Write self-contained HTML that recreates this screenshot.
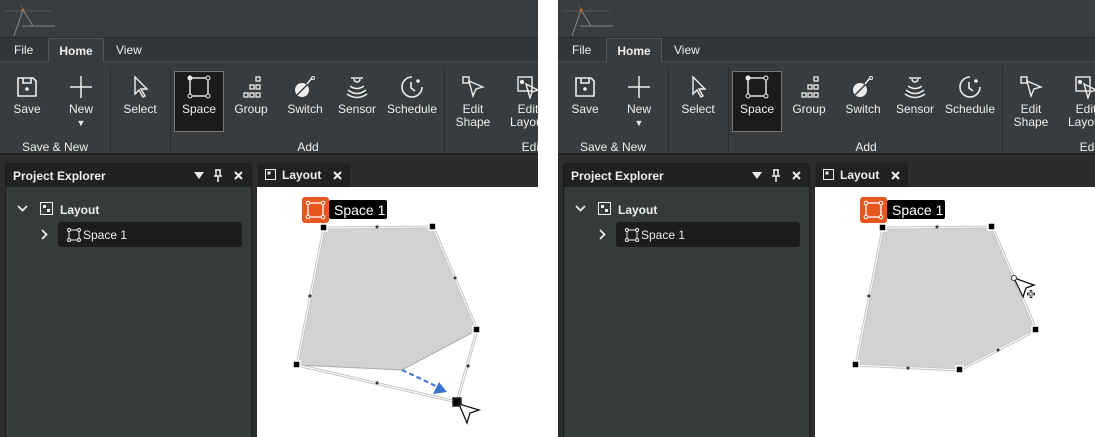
<!DOCTYPE html>
<html><head><meta charset="utf-8"><style>
*{margin:0;padding:0;box-sizing:border-box}
body{width:1095px;height:437px;background:#fff;position:relative;overflow:hidden;font-family:"Liberation Sans",sans-serif;color:#eee}
.p{position:absolute;top:0;height:437px;overflow:hidden;background:#2a2c2e}
.title{position:absolute;left:0;top:0;width:100%;height:38px;background:#3a3d40;border-bottom:1px solid #2a2c2e}
.tabs{position:absolute;left:0;top:38px;width:100%;height:24px;background:#333639;border-bottom:1px solid #4a4d50}
.tab{position:absolute;top:5px;font-size:12px;color:#eee}
.home{position:absolute;left:48px;top:0;width:56px;height:25px;background:#393c3e;border:1px solid #55585b;border-bottom:none;font-weight:bold;font-size:12px;text-align:center;padding-top:5px}
.rib{position:absolute;left:0;top:62px;width:100%;height:93px;background:#393c3e;border-bottom:2px solid #1e2022}
.it{position:absolute;top:0;width:60px;margin-left:-30px;text-align:center;font-size:12px;line-height:13px}
.it svg{display:block;margin:13px auto 4px;width:24px;height:24px}
.sep{position:absolute;top:5px;width:1px;height:86px;background:#2a2c2e}
.gl{position:absolute;top:78px;font-size:12px;transform:translateX(-50%)}
.pe{position:absolute;left:5px;top:163px;width:247px;height:280px;background:#363a3b;border:1px solid #1b1c1e;border-radius:3px 3px 0 0}
.peh{height:23px;background:#1f2123;font-size:12px;font-weight:bold;padding:5px 0 0 7px;position:relative}
.lt{position:absolute;left:258px;top:163px;width:92px;height:24px;background:#1f2123;border-radius:3px 3px 0 0;font-size:12px;font-weight:bold;padding:5px 0 0 24px}
.cv{position:absolute;left:257px;top:187px;width:400px;height:260px;background:#fff}
.t{position:absolute;font-size:12px}
</style></head><body>

<div class="p" style="left:0;width:538px">
<div class="title"><svg width="160" height="38" style="position:absolute;left:0;top:0"><path d="M4 11 L52 11" stroke="#555" stroke-width="1"/><path d="M14 36 L23 10 L33 26 M22 26 L55 26" stroke="#888" fill="none" stroke-width="1"/><path d="M20 4 L23 10" stroke="#555"/><circle cx="23" cy="10" r="1.5" fill="#c86a2a"/></svg></div>
<div class="tabs"><span class="tab" style="left:14px">File</span><div class="home">Home</div><span class="tab" style="left:116px">View</span></div>
<div class="rib">
 <div class="it" style="left:27px"><svg viewBox="0 0 24 24"><path d="M3 3h15l3 3v15H3z M8 3v5h8V3" fill="none" stroke="#eee" stroke-width="1.6"/><circle cx="12" cy="14" r="1.8" fill="#eee"/></svg>Save</div>
 <div class="it" style="left:81px"><svg viewBox="0 0 24 24"><path d="M12 1v22M1 12h22" stroke="#eee" stroke-width="1.5"/></svg>New<br><span style="font-size:9px">▼</span></div>
 <div class="sep" style="left:110px"></div>
 <div class="it" style="left:140px"><svg viewBox="0 0 24 24"><path d="M7 2v17l4-4 4 7 2-1-4-7h6z" fill="none" stroke="#eee" stroke-width="1.4"/></svg>Select</div>
 <div class="sep" style="left:170px"></div>
 <div style="position:absolute;left:174px;top:9px;width:50px;height:61px;background:#1b1b1b;border:1px solid #777"></div>
 <div class="it" style="left:199px"><svg viewBox="0 0 24 24"><rect x="3" y="3" width="18" height="18" fill="none" stroke="#eee" stroke-width="1.4"/><circle cx="3" cy="3" r="2.5" fill="#eee"/><circle cx="21" cy="3" r="2" fill="#1b1b1b" stroke="#eee"/><circle cx="3" cy="21" r="2" fill="#1b1b1b" stroke="#eee"/><circle cx="21" cy="21" r="2" fill="#1b1b1b" stroke="#eee"/></svg>Space</div>
 <div class="it" style="left:251px"><svg viewBox="0 0 24 24" fill="none" stroke="#eee" stroke-width="1.3"><rect x="17" y="2" width="4" height="4"/><rect x="11" y="10" width="4" height="4"/><rect x="17" y="10" width="4" height="4"/><rect x="5" y="18" width="4" height="4"/><rect x="11" y="18" width="4" height="4"/><rect x="17" y="18" width="4" height="4"/></svg>Group</div>
 <div class="it" style="left:305px"><svg viewBox="0 0 24 24"><circle cx="9" cy="15" r="7" fill="#eee"/><path d="M4 20l10-10" stroke="#393c3e" stroke-width="1.5"/><path d="M14 9l5-6" stroke="#eee" stroke-width="1.5"/><circle cx="20" cy="3" r="1.5" fill="none" stroke="#eee"/></svg>Switch</div>
 <div class="it" style="left:357px"><svg viewBox="0 0 24 24" fill="none" stroke="#eee" stroke-width="1.5"><path d="M6 3h12M9 4a3 3 0 006 0"/><path d="M5 11q7 5 14 0M3 15q9 7 18 0M2 19q10 7 20 0"/></svg>Sensor</div>
 <div class="it" style="left:412px"><svg viewBox="0 0 24 24" fill="none" stroke="#eee" stroke-width="1.6"><path d="M12 2a10 10 0 1 0 10 10"/><path d="M11 7v6l4 3"/><circle cx="18" cy="6" r="1" fill="#eee"/></svg>Schedule</div>
 <div class="sep" style="left:444px"></div>
 <div class="it" style="left:473px"><svg viewBox="0 0 24 24" fill="none" stroke="#eee" stroke-width="1.4"><rect x="2" y="2" width="6" height="6"/><path d="M8 6l14 6-7 2-3 7z"/></svg>Edit<br>Shape</div>
 <div class="it" style="left:528px"><svg viewBox="0 0 24 24" fill="none" stroke="#eee" stroke-width="1.4"><rect x="2" y="2" width="14" height="14"/><path d="M10 9l12 6-6 2-2 6z"/><circle cx="6" cy="7" r="1.5" fill="#eee"/></svg>Edit<br>Layout</div>
 <div class="gl" style="left:55px">Save &amp; New</div>
 <div class="gl" style="left:308px">Add</div>
 <div class="gl" style="left:532px">Edit</div>
</div>
<div class="pe"><div class="peh">Project Explorer
 <svg style="position:absolute;left:188px;top:8px" width="10" height="8"><path d="M0 0h10L5 7z" fill="#eee"/></svg>
 <svg style="position:absolute;left:207px;top:5px" width="10" height="13"><path d="M2 1h6M3 1v6M7 1v6M1 7h8M5 7v6" stroke="#eee" stroke-width="1.5" fill="none"/></svg>
 <svg style="position:absolute;left:228px;top:7px" width="9" height="9"><path d="M1 1l7 7M8 1l-7 7" stroke="#eee" stroke-width="2"/></svg></div>
 <svg style="position:absolute;left:11px;top:41px" width="11" height="8"><path d="M1 1l4.5 4.5L10 1" stroke="#eee" stroke-width="1.8" fill="none"/></svg>
 <svg style="position:absolute;left:34px;top:38px" width="13" height="13"><rect x="0.5" y="0.5" width="12" height="12" fill="none" stroke="#eee"/><rect x="3" y="3" width="3" height="3" fill="#eee"/><rect x="7" y="7" width="3" height="3" fill="#eee"/></svg>
 <span class="t" style="left:54px;top:39px;font-weight:bold">Layout</span>
 <div style="position:absolute;left:52px;top:58px;width:184px;height:25px;background:#1c1c1c;border-radius:3px"></div>
 <svg style="position:absolute;left:35px;top:65px" width="8" height="11"><path d="M1 1l4.5 4.5L1 10" stroke="#eee" stroke-width="1.8" fill="none"/></svg>
 <svg style="position:absolute;left:61px;top:64px" width="14" height="14"><rect x="2" y="2" width="10" height="10" fill="none" stroke="#eee"/><g fill="#1c1c1c" stroke="#eee"><circle cx="2" cy="2" r="1.5"/><circle cx="12" cy="2" r="1.5"/><circle cx="2" cy="12" r="1.5"/><circle cx="12" cy="12" r="1.5"/></g></svg>
 <span class="t" style="left:77px;top:64px">Space 1</span>
</div>
<div class="lt"><svg style="position:absolute;left:7px;top:6px" width="11" height="11"><rect x="0.5" y="0.5" width="10" height="10" fill="none" stroke="#eee"/><rect x="2.5" y="2.5" width="3" height="3" fill="#eee"/></svg>Layout<svg style="position:absolute;left:75px;top:8px" width="9" height="9"><path d="M1 1l7 7M8 1l-7 7" stroke="#eee" stroke-width="2"/></svg></div>
<div class="cv"></div>
<svg style="position:absolute;left:0;top:0" width="538" height="437">
 <polygon points="324,228 433,227 477,330 402,370 297,365" fill="#d2d2d2" stroke="#aaa"/>
 <g fill="none" stroke="#c4c4c4" stroke-width="3"><polyline points="297,365 324,228 433,227 477,330 457,402 297,365"/></g>
 <g fill="none" stroke="#fff" stroke-width="1"><polyline points="297,365 324,228 433,227 477,330 457,402 297,365"/></g>
 <path d="M402 370 L438 387" stroke="#3b74d0" stroke-width="2" stroke-dasharray="5,3"/><path d="M433 394 L447 392 L439 382z" fill="#3b74d0"/>
 <g fill="#000" stroke="#fff" stroke-width="1.5"><rect x="320" y="224" width="7" height="7"/><rect x="429" y="223" width="7" height="7"/><rect x="473" y="326" width="7" height="7"/><rect x="293" y="361" width="7" height="7"/><rect x="453" y="398" width="8" height="8" stroke="#222"/></g>
 <g fill="#333" stroke="#ddd"><circle cx="377" cy="227" r="2"/><circle cx="455" cy="278" r="2"/><circle cx="310" cy="296" r="2"/><circle cx="377" cy="383" r="2"/><circle cx="468" cy="366" r="2"/></g>
 <path d="M459 404 L479 410 L470 413 L467 423z" fill="#fff" stroke="#111" stroke-width="1.3"/>
 <rect x="302" y="197" width="27" height="26" rx="3" fill="#e8561f"/><rect x="308" y="203" width="15" height="14" fill="none" stroke="#fff" stroke-width="1.3"/><g fill="#e8561f" stroke="#fff"><circle cx="308" cy="203" r="1.8"/><circle cx="323" cy="203" r="1.8"/><circle cx="308" cy="217" r="1.8"/><circle cx="323" cy="217" r="1.8"/></g>
 <rect x="329" y="200" width="58" height="19" rx="2" fill="#000"/><text x="334" y="215" fill="#fff" font-size="14" font-family="Liberation Sans">Space 1</text>
</svg>
</div>

<div class="p" style="left:558px;width:537px">
<div class="title"><svg width="160" height="38" style="position:absolute;left:0;top:0"><path d="M4 11 L52 11" stroke="#555" stroke-width="1"/><path d="M14 36 L23 10 L33 26 M22 26 L55 26" stroke="#888" fill="none" stroke-width="1"/><path d="M20 4 L23 10" stroke="#555"/><circle cx="23" cy="10" r="1.5" fill="#c86a2a"/></svg></div>
<div class="tabs"><span class="tab" style="left:14px">File</span><div class="home">Home</div><span class="tab" style="left:116px">View</span></div>
<div class="rib">
 <div class="it" style="left:27px"><svg viewBox="0 0 24 24"><path d="M3 3h15l3 3v15H3z M8 3v5h8V3" fill="none" stroke="#eee" stroke-width="1.6"/><circle cx="12" cy="14" r="1.8" fill="#eee"/></svg>Save</div>
 <div class="it" style="left:81px"><svg viewBox="0 0 24 24"><path d="M12 1v22M1 12h22" stroke="#eee" stroke-width="1.5"/></svg>New<br><span style="font-size:9px">▼</span></div>
 <div class="sep" style="left:110px"></div>
 <div class="it" style="left:140px"><svg viewBox="0 0 24 24"><path d="M7 2v17l4-4 4 7 2-1-4-7h6z" fill="none" stroke="#eee" stroke-width="1.4"/></svg>Select</div>
 <div class="sep" style="left:170px"></div>
 <div style="position:absolute;left:174px;top:9px;width:50px;height:61px;background:#1b1b1b;border:1px solid #777"></div>
 <div class="it" style="left:199px"><svg viewBox="0 0 24 24"><rect x="3" y="3" width="18" height="18" fill="none" stroke="#eee" stroke-width="1.4"/><circle cx="3" cy="3" r="2.5" fill="#eee"/><circle cx="21" cy="3" r="2" fill="#1b1b1b" stroke="#eee"/><circle cx="3" cy="21" r="2" fill="#1b1b1b" stroke="#eee"/><circle cx="21" cy="21" r="2" fill="#1b1b1b" stroke="#eee"/></svg>Space</div>
 <div class="it" style="left:251px"><svg viewBox="0 0 24 24" fill="none" stroke="#eee" stroke-width="1.3"><rect x="17" y="2" width="4" height="4"/><rect x="11" y="10" width="4" height="4"/><rect x="17" y="10" width="4" height="4"/><rect x="5" y="18" width="4" height="4"/><rect x="11" y="18" width="4" height="4"/><rect x="17" y="18" width="4" height="4"/></svg>Group</div>
 <div class="it" style="left:305px"><svg viewBox="0 0 24 24"><circle cx="9" cy="15" r="7" fill="#eee"/><path d="M4 20l10-10" stroke="#393c3e" stroke-width="1.5"/><path d="M14 9l5-6" stroke="#eee" stroke-width="1.5"/><circle cx="20" cy="3" r="1.5" fill="none" stroke="#eee"/></svg>Switch</div>
 <div class="it" style="left:357px"><svg viewBox="0 0 24 24" fill="none" stroke="#eee" stroke-width="1.5"><path d="M6 3h12M9 4a3 3 0 006 0"/><path d="M5 11q7 5 14 0M3 15q9 7 18 0M2 19q10 7 20 0"/></svg>Sensor</div>
 <div class="it" style="left:412px"><svg viewBox="0 0 24 24" fill="none" stroke="#eee" stroke-width="1.6"><path d="M12 2a10 10 0 1 0 10 10"/><path d="M11 7v6l4 3"/><circle cx="18" cy="6" r="1" fill="#eee"/></svg>Schedule</div>
 <div class="sep" style="left:444px"></div>
 <div class="it" style="left:473px"><svg viewBox="0 0 24 24" fill="none" stroke="#eee" stroke-width="1.4"><rect x="2" y="2" width="6" height="6"/><path d="M8 6l14 6-7 2-3 7z"/></svg>Edit<br>Shape</div>
 <div class="it" style="left:528px"><svg viewBox="0 0 24 24" fill="none" stroke="#eee" stroke-width="1.4"><rect x="2" y="2" width="14" height="14"/><path d="M10 9l12 6-6 2-2 6z"/><circle cx="6" cy="7" r="1.5" fill="#eee"/></svg>Edit<br>Layout</div>
 <div class="gl" style="left:55px">Save &amp; New</div>
 <div class="gl" style="left:308px">Add</div>
 <div class="gl" style="left:532px">Edit</div>
</div>
<div class="pe"><div class="peh">Project Explorer
 <svg style="position:absolute;left:188px;top:8px" width="10" height="8"><path d="M0 0h10L5 7z" fill="#eee"/></svg>
 <svg style="position:absolute;left:207px;top:5px" width="10" height="13"><path d="M2 1h6M3 1v6M7 1v6M1 7h8M5 7v6" stroke="#eee" stroke-width="1.5" fill="none"/></svg>
 <svg style="position:absolute;left:228px;top:7px" width="9" height="9"><path d="M1 1l7 7M8 1l-7 7" stroke="#eee" stroke-width="2"/></svg></div>
 <svg style="position:absolute;left:11px;top:41px" width="11" height="8"><path d="M1 1l4.5 4.5L10 1" stroke="#eee" stroke-width="1.8" fill="none"/></svg>
 <svg style="position:absolute;left:34px;top:38px" width="13" height="13"><rect x="0.5" y="0.5" width="12" height="12" fill="none" stroke="#eee"/><rect x="3" y="3" width="3" height="3" fill="#eee"/><rect x="7" y="7" width="3" height="3" fill="#eee"/></svg>
 <span class="t" style="left:54px;top:39px;font-weight:bold">Layout</span>
 <div style="position:absolute;left:52px;top:58px;width:184px;height:25px;background:#1c1c1c;border-radius:3px"></div>
 <svg style="position:absolute;left:35px;top:65px" width="8" height="11"><path d="M1 1l4.5 4.5L1 10" stroke="#eee" stroke-width="1.8" fill="none"/></svg>
 <svg style="position:absolute;left:61px;top:64px" width="14" height="14"><rect x="2" y="2" width="10" height="10" fill="none" stroke="#eee"/><g fill="#1c1c1c" stroke="#eee"><circle cx="2" cy="2" r="1.5"/><circle cx="12" cy="2" r="1.5"/><circle cx="2" cy="12" r="1.5"/><circle cx="12" cy="12" r="1.5"/></g></svg>
 <span class="t" style="left:77px;top:64px">Space 1</span>
</div>
<div class="lt"><svg style="position:absolute;left:7px;top:6px" width="11" height="11"><rect x="0.5" y="0.5" width="10" height="10" fill="none" stroke="#eee"/><rect x="2.5" y="2.5" width="3" height="3" fill="#eee"/></svg>Layout<svg style="position:absolute;left:75px;top:8px" width="9" height="9"><path d="M1 1l7 7M8 1l-7 7" stroke="#eee" stroke-width="2"/></svg></div>
<div class="cv"></div>
<svg style="position:absolute;left:0;top:0" width="537" height="437">
 <polygon points="325,228 434,227 478,330 402,370 298,365" fill="#d2d2d2"/>
 <g fill="none" stroke="#c4c4c4" stroke-width="3"><polygon points="325,228 434,227 478,330 402,370 298,365"/></g>
 <g fill="none" stroke="#fff" stroke-width="1"><polygon points="325,228 434,227 478,330 402,370 298,365"/></g>
 <g fill="#000" stroke="#fff" stroke-width="1.5"><rect x="321" y="224" width="7" height="7"/><rect x="430" y="223" width="7" height="7"/><rect x="474" y="326" width="7" height="7"/><rect x="398" y="366" width="7" height="7"/><rect x="294" y="361" width="7" height="7"/></g>
 <g fill="#333" stroke="#ddd"><circle cx="379" cy="227" r="2"/><circle cx="311" cy="296" r="2"/><circle cx="350" cy="368" r="2"/><circle cx="440" cy="350" r="2"/></g>
 <path d="M456 278 L476 285 L468 288 L465 297z" fill="#fff" stroke="#111" stroke-width="1.3"/><circle cx="456" cy="278" r="2.5" fill="#fff" stroke="#333"/>
 <path d="M473 290v8M469 294h8" stroke="#111" stroke-width="2.5"/><path d="M473 291v6M470 294h6" stroke="#fff" stroke-width="1"/>
 <rect x="302" y="197" width="27" height="26" rx="3" fill="#e8561f"/><rect x="308" y="203" width="15" height="14" fill="none" stroke="#fff" stroke-width="1.3"/><g fill="#e8561f" stroke="#fff"><circle cx="308" cy="203" r="1.8"/><circle cx="323" cy="203" r="1.8"/><circle cx="308" cy="217" r="1.8"/><circle cx="323" cy="217" r="1.8"/></g>
 <rect x="329" y="200" width="58" height="19" rx="2" fill="#000"/><text x="334" y="215" fill="#fff" font-size="14" font-family="Liberation Sans">Space 1</text>
</svg>
</div>
</body></html>
